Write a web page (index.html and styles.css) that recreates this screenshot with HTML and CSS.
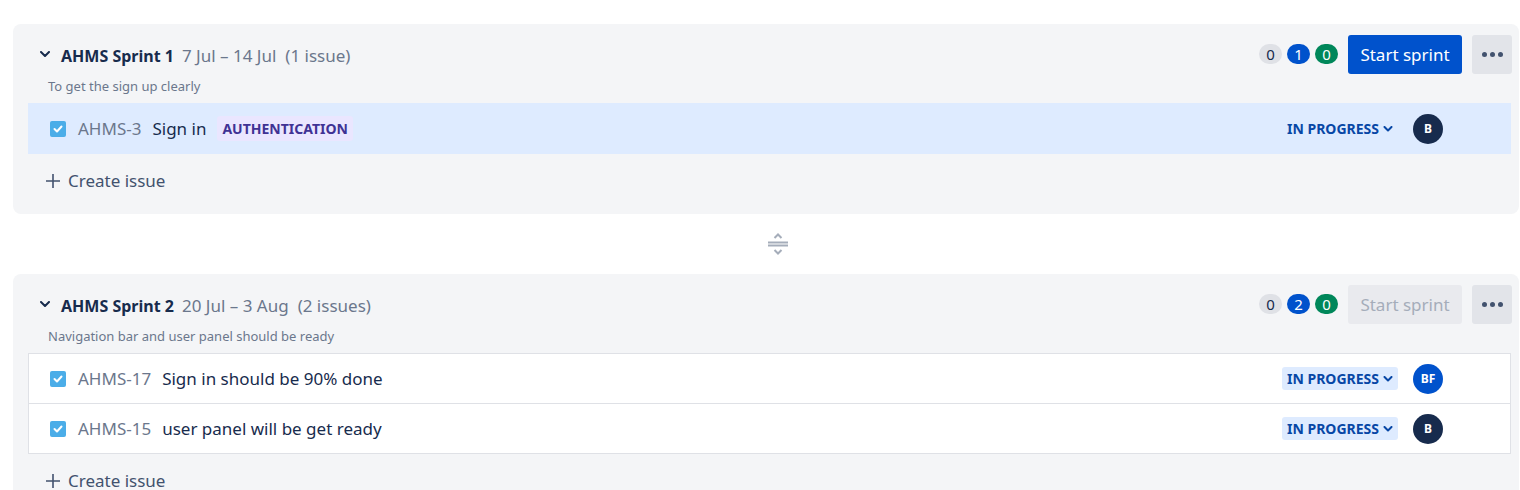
FILE: index.html
```html
<!DOCTYPE html>
<html>
<head>
<meta charset="utf-8">
<link rel="stylesheet" href="styles.css">
</head>
<body>
<section class="sprint">
  <div class="sprint-head">
    <div class="head-row">
      <div class="head-left">
        <svg class="chev" width="10" height="6" viewBox="0 0 10 6"><path d="M1 1l4 4 4-4" fill="none" stroke="#172b4d" stroke-width="2" stroke-linecap="round" stroke-linejoin="round"/></svg>
        <span class="title">AHMS Sprint 1</span>
        <span class="dates">7 Jul – 14 Jul</span>
        <span class="count">(1 issue)</span>
      </div>
      <div class="head-right">
        <span class="pill grey">0</span>
        <span class="pill blue">1</span>
        <span class="pill green">0</span>
        <button class="start">Start sprint</button>
        <button class="more"><i></i><i></i><i></i></button>
      </div>
    </div>
    <div class="desc">To get the sign up clearly</div>
  </div>
  <div class="issues selected">
    <div class="issue">
      <div class="issue-left">
        <span class="check"><svg width="10" height="8" viewBox="0 0 10 8"><path d="M1.5 4l2.5 2.5 4.5-5" fill="none" stroke="#fff" stroke-width="2" stroke-linecap="round" stroke-linejoin="round"/></svg></span>
        <span class="key">AHMS-3</span>
        <span class="summary">Sign in</span>
        <span class="label">AUTHENTICATION</span>
      </div>
      <div class="issue-right">
        <span class="status plain">IN PROGRESS <svg width="10" height="6" viewBox="0 0 10 6"><path d="M1.5 1l3.5 3.5 3.5-3.5" fill="none" stroke="#0747a6" stroke-width="2" stroke-linecap="round" stroke-linejoin="round"/></svg></span>
        <span class="avatar dark">B</span>
      </div>
    </div>
  </div>
  <div class="create"><svg width="14" height="14" viewBox="0 0 14 14"><path d="M7 0v14M0 7h14" stroke="#42526e" stroke-width="1.6"/></svg>Create issue</div>
</section>

<div class="divider">
  <svg width="22" height="24" viewBox="0 0 22 24"><path d="M7.5 6l3.5-3.5 3.5 3.5M7.5 18l3.5 3.5 3.5-3.5" fill="none" stroke="#a5adba" stroke-width="2"/><path d="M1 10.5h20M1 13.5h20" stroke="#a5adba" stroke-width="1.8"/></svg>
</div>

<section class="sprint">
  <div class="sprint-head">
    <div class="head-row">
      <div class="head-left">
        <svg class="chev" width="10" height="6" viewBox="0 0 10 6"><path d="M1 1l4 4 4-4" fill="none" stroke="#172b4d" stroke-width="2" stroke-linecap="round" stroke-linejoin="round"/></svg>
        <span class="title">AHMS Sprint 2</span>
        <span class="dates">20 Jul – 3 Aug</span>
        <span class="count">(2 issues)</span>
      </div>
      <div class="head-right">
        <span class="pill grey">0</span>
        <span class="pill blue">2</span>
        <span class="pill green">0</span>
        <button class="start disabled">Start sprint</button>
        <button class="more"><i></i><i></i><i></i></button>
      </div>
    </div>
    <div class="desc">Navigation bar and user panel should be ready</div>
  </div>
  <div class="issues">
    <div class="issue">
      <div class="issue-left">
        <span class="check"><svg width="10" height="8" viewBox="0 0 10 8"><path d="M1.5 4l2.5 2.5 4.5-5" fill="none" stroke="#fff" stroke-width="2" stroke-linecap="round" stroke-linejoin="round"/></svg></span>
        <span class="key">AHMS-17</span>
        <span class="summary">Sign in should be 90% done</span>
      </div>
      <div class="issue-right">
        <span class="status">IN PROGRESS <svg width="10" height="6" viewBox="0 0 10 6"><path d="M1.5 1l3.5 3.5 3.5-3.5" fill="none" stroke="#0747a6" stroke-width="2" stroke-linecap="round" stroke-linejoin="round"/></svg></span>
        <span class="avatar bluebg">BF</span>
      </div>
    </div>
    <div class="issue">
      <div class="issue-left">
        <span class="check"><svg width="10" height="8" viewBox="0 0 10 8"><path d="M1.5 4l2.5 2.5 4.5-5" fill="none" stroke="#fff" stroke-width="2" stroke-linecap="round" stroke-linejoin="round"/></svg></span>
        <span class="key">AHMS-15</span>
        <span class="summary">user panel will be get ready</span>
      </div>
      <div class="issue-right">
        <span class="status">IN PROGRESS <svg width="10" height="6" viewBox="0 0 10 6"><path d="M1.5 1l3.5 3.5 3.5-3.5" fill="none" stroke="#0747a6" stroke-width="2" stroke-linecap="round" stroke-linejoin="round"/></svg></span>
        <span class="avatar dark">B</span>
      </div>
    </div>
  </div>
  <div class="create"><svg width="14" height="14" viewBox="0 0 14 14"><path d="M7 0v14M0 7h14" stroke="#42526e" stroke-width="1.6"/></svg>Create issue</div>
</section>
</body>
</html>
```

FILE: styles.css
```css
* { box-sizing: border-box; }
html, body { background: #fff; }
body {
  margin: 24px 1px 0 13px;
  font-family: "Noto Sans", "Open Sans", sans-serif;
  color: #172b4d;
  overflow: hidden;
}
.sprint {
  background: #f4f5f7;
  border-radius: 8px;
  padding: 0 8px 0 15px;
}
.sprint-head {
  height: 80px;
  padding-top: 10px;
}
.head-row {
  display: flex;
  align-items: center;
  justify-content: space-between;
  height: 40px;
}
.head-left {
  display: flex;
  align-items: center;
  padding-left: 12px;
  font-size: 17px;
  padding-top: 3px;
}
.chev { margin-right: 11px; margin-top: -4px; }
.title { font-weight: 700; font-size: 16px; margin-right: 8px; }
.dates { color: #6b778c; margin-right: 9px; }
.count { color: #6b778c; }
.head-right {
  display: flex;
  align-items: center;
  margin-right: -1px;
}
.pill {
  min-width: 23px;
  height: 20px;
  border-radius: 10px;
  font-size: 15px;
  line-height: 20px;
  text-align: center;
  margin-left: 5px;
  padding: 0 6px;
}
.pill.grey { background: #dfe1e6; color: #172b4d; }
.pill.blue { background: #0052cc; color: #fff; }
.pill.green { background: #00875a; color: #fff; }
.start {
  margin-left: 10px;
  width: 114px;
  height: 39px;
  border: 0;
  border-radius: 3px;
  background: #0052cc;
  color: #fff;
  font-family: inherit;
  font-size: 17px;
  padding: 0;
}
.start.disabled { background: #e9eaee; color: #a5adba; }
.more {
  margin-left: 10px;
  width: 40px;
  height: 39px;
  border: 0;
  border-radius: 3px;
  background: #e2e4e9;
  display: flex;
  align-items: center;
  justify-content: center;
  gap: 3px;
  padding: 0;
}
.more i {
  display: block;
  width: 5px;
  height: 5px;
  border-radius: 50%;
  background: #42526e;
}
.desc {
  font-size: 13px;
  color: #6b778c;
  padding-left: 20px;
  margin-top: 3px;
  line-height: 18px;
}
.issues {
  background: #fff;
  border: 1px solid #dfe1e6;
  margin-top: -1px;
}
.issues.selected { background: #deebff; border-color: #deebff; }
.issue {
  display: flex;
  align-items: center;
  justify-content: space-between;
  height: 49px;
  padding: 0 67px 0 21px;
}
.issue + .issue { border-top: 1px solid #dfe1e6; height: 50px; }
.issue-left { display: flex; align-items: center; font-size: 17px; }
.check {
  width: 16px;
  height: 16px;
  border-radius: 2px;
  background: #4bade8;
  display: flex;
  align-items: center;
  justify-content: center;
  margin-right: 12px;
}
.key { color: #6b778c; margin-right: 11px; }
.summary { color: #172b4d; margin-right: 11px; }
.label {
  background: #eae6ff;
  color: #403294;
  font-size: 14px;
  font-weight: 700;
  padding: 1px 5px;
  border-radius: 3px;
  line-height: 23px;
}
.issue-right { display: flex; align-items: center; }
.status {
  display: flex;
  align-items: center;
  gap: 4px;
  background: #deebff;
  color: #0747a6;
  font-size: 14px;
  font-weight: 700;
  height: 23px;
  padding: 0 5px;
  border-radius: 3px;
  margin-right: 15px;
}
.status.plain { background: transparent; }
.avatar {
  width: 30px;
  height: 30px;
  border-radius: 50%;
  color: #fff;
  font-size: 12px;
  font-weight: 700;
  display: flex;
  align-items: center;
  justify-content: center;
}
.avatar.dark { background: #172b4d; }
.avatar.bluebg { background: #0052cc; }
.create {
  height: 60px;
  display: flex;
  align-items: flex-start;
  padding: 15px 0 0 18px;
  font-size: 17px;
  line-height: 24px;
  color: #42526e;
}
.create svg { margin-right: 8px; margin-top: 5px; }
.divider {
  height: 60px;
  display: flex;
  align-items: center;
  justify-content: center;
  padding-left: 24px;
}
```
